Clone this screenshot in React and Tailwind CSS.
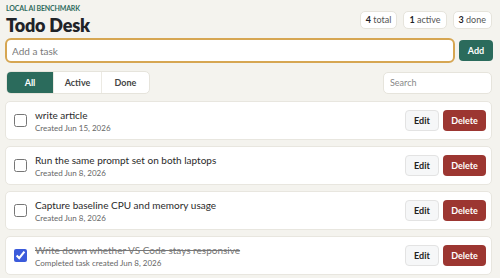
import React, { useState } from 'react';

const tasks = [
  { id: 1, title: 'write article', meta: 'Created Jun 15, 2026', done: false },
  { id: 2, title: 'Run the same prompt set on both laptops', meta: 'Created Jun 8, 2026', done: false },
  { id: 3, title: 'Capture baseline CPU and memory usage', meta: 'Created Jun 8, 2026', done: false },
  { id: 4, title: 'Write down whether VS Code stays responsive', meta: 'Completed task created Jun 8, 2026', done: true },
];

const App = () => {
  const [filter, setFilter] = useState('All');

  return (
    <div className="min-h-[278px] bg-[#f4f3ee] px-[5px] pt-[4px] font-['Lato',sans-serif] text-[#1f2328]">
      {/* Header */}
      <div className="flex items-start justify-between">
        <div>
          <div className="pl-[1px] text-[7px] font-bold uppercase leading-[8px] tracking-tight text-[#2f6b5d]">Local AI Benchmark</div>
          <h1 className="mt-[2px] pl-[1px] text-[18px] font-extrabold leading-[22px] tracking-[-0.2px]">Todo Desk</h1>
        </div>
        <div className="mt-[7px] flex gap-[6px] pr-[3px]">
          {[['4', 'total'], ['1', 'active'], ['3', 'done']].map(([n, l]) => (
            <span key={l} className="rounded-[5px] border border-[#e6e4dc] bg-white px-[5px] py-[1px] text-[9px] leading-[14px] text-[#555]">
              <b className="text-[#1f2328]">{n}</b> {l}
            </span>
          ))}
        </div>
      </div>

      {/* Add task */}
      <div className="mt-[2px] flex items-center gap-[4px]">
        <input
          placeholder="Add a task"
          className="h-[25px] flex-1 rounded-[6px] border-2 border-[#d6a652] bg-white px-[5px] text-[10px] outline-none placeholder:text-[#7a7a7a]"
        />
        <button className="mr-[2px] h-[21px] w-[34px] rounded-[4px] bg-[#2b6b5c] text-[9px] font-bold text-white">Add</button>
      </div>

      {/* Filters */}
      <div className="mt-[8px] flex items-center justify-between pl-[1px] pr-[3px]">
        <div className="flex overflow-hidden rounded-[5px] border border-[#e6e4dc] bg-white">
          {['All', 'Active', 'Done'].map((f) => (
            <button
              key={f}
              onClick={() => setFilter(f)}
              className={
                filter === f
                  ? 'h-[21px] w-[46px] bg-[#2b6b5c] text-[9px] font-bold text-white'
                  : 'h-[21px] w-[48px] border-l border-[#eceae3] text-[9px] font-bold text-[#444]'
              }
            >
              {f}
            </button>
          ))}
        </div>
        <input
          placeholder="Search"
          className="h-[22px] w-[109px] rounded-[5px] border border-[#e6e4dc] bg-white px-[6px] text-[9px] outline-none placeholder:text-[#888]"
        />
      </div>

      {/* Task list */}
      <div className="mt-[7px] flex flex-col gap-[6px] pr-[3px]">
        {tasks.map((t) => (
          <div key={t.id} className="flex h-[39px] items-center rounded-[5px] border border-[#e8e6df] bg-white pl-[8px] pr-[5px]">
            <input
              type="checkbox"
              defaultChecked={t.done}
              className="h-[13px] w-[13px] accent-[#3b5bdb]"
            />
            <div className="ml-[8px] flex-1">
              <div className={t.done ? 'text-[10px] leading-[13px] text-[#777] line-through' : 'text-[10px] leading-[13px] text-[#2a2a2a]'}>
                {t.title}
              </div>
              <div className="mt-[1px] text-[8px] leading-[10px] text-[#666]">{t.meta}</div>
            </div>
            <button className="h-[21px] w-[34px] rounded-[4px] border border-[#e3e3e3] bg-[#f6f7f8] text-[9px] font-bold text-[#222]">Edit</button>
            <button className="ml-[4px] h-[21px] w-[43px] rounded-[4px] bg-[#9c3631] text-[9px] font-bold text-white">Delete</button>
          </div>
        ))}
      </div>
    </div>
  );
};

export default App;
